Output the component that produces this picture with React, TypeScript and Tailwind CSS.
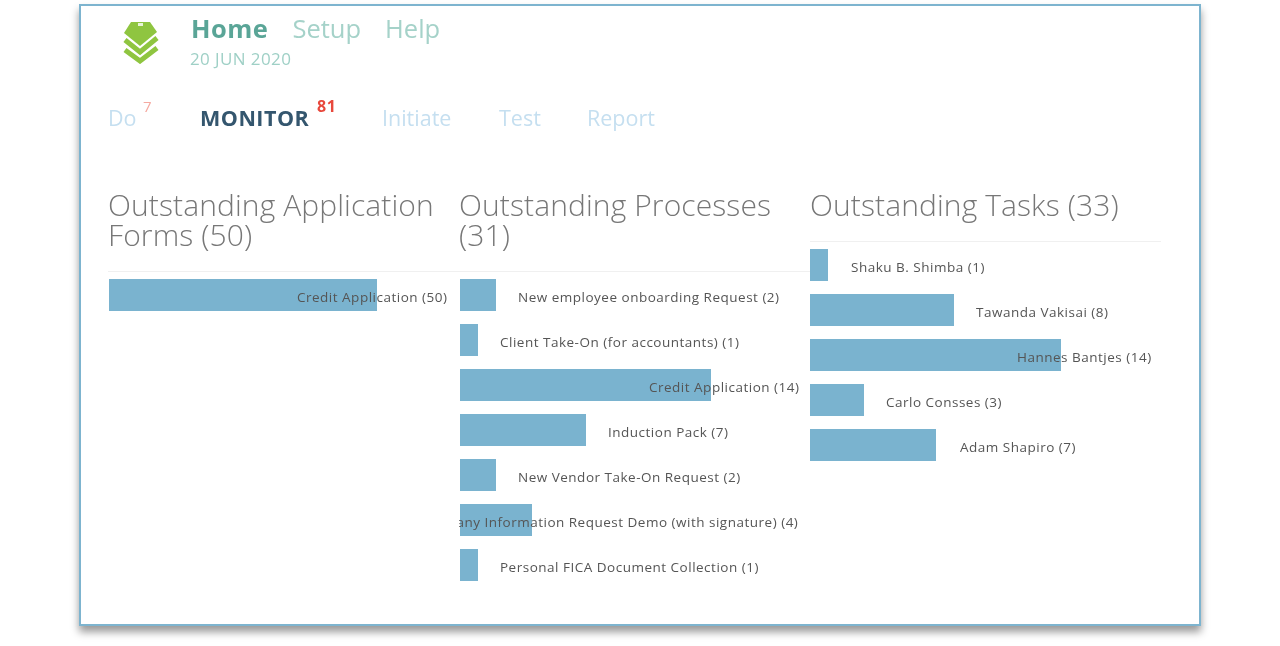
const forms = [{ label: 'Credit Application (50)', bar: 268, offset: -80 }];

const processes = [
  { label: 'New employee onboarding Request (2)', bar: 36, offset: 22 },
  { label: 'Client Take-On (for accountants) (1)', bar: 18, offset: 22 },
  { label: 'Credit Application (14)', bar: 251, offset: -62 },
  { label: 'Induction Pack (7)', bar: 126, offset: 22 },
  { label: 'New Vendor Take-On Request (2)', bar: 36, offset: 22 },
  { label: 'Company Information Request Demo (with signature) (4)', bar: 72, offset: -115 },
  { label: 'Personal FICA Document Collection (1)', bar: 18, offset: 22 },
];

const tasks = [
  { label: 'Shaku B. Shimba (1)', bar: 18, offset: 23 },
  { label: 'Tawanda Vakisai (8)', bar: 144, offset: 22 },
  { label: 'Hannes Bantjes (14)', bar: 251, offset: -44 },
  { label: 'Carlo Consses (3)', bar: 54, offset: 22 },
  { label: 'Adam Shapiro (7)', bar: 126, offset: 24 },
];

type Row = { label: string; bar: number; offset: number };

function Chart({ title, rows, heading, inset }: { title: string; rows: Row[]; heading: string; inset: string }) {
  return (
    <div className="min-w-0">
      <h2 className={`${heading} border-b border-[#f0f0f0] text-[30px] leading-[30px] tracking-[0.1px] font-light text-[#777777]`}>{title}</h2>
      <div className={`${inset} flex flex-col gap-[13px] pt-[7px] overflow-hidden`}>
        {rows.map((r) => (
          <div key={r.label} className="flex items-center h-[32px] whitespace-nowrap">
            <div className="h-[32px] shrink-0 bg-[#7ab3cf]" style={{ width: r.bar }} />
            <span className="text-[13.5px] tracking-[0.5px] text-[#555555] pt-[4px]" style={{ marginLeft: r.offset }}>
              {r.label}
            </span>
          </div>
        ))}
      </div>
    </div>
  );
}

function Logo() {
  return (
    <svg width="36" height="44" viewBox="0 0 36 44" className="shrink-0 mt-[14px]">
      <path d="M8 2 H27 L34 12 L17 26 L1 13 Z" fill="#8fc540" />
      <path d="M2 20 L17 32 L34 18" fill="none" stroke="#8fc540" strokeWidth="5" />
      <path d="M2 30 L17 41 L34 28" fill="none" stroke="#8fc540" strokeWidth="5" />
      <rect x="15" y="3" width="5" height="3" fill="#ffffff" opacity="0.8" />
    </svg>
  );
}

export default function App() {
  return (
    <div className="w-[1280px] h-[646px] bg-white pl-[79px] pt-[4px] font-['Open_Sans',sans-serif]">
      <div className="w-[1122px] h-[622px] border-2 border-[#7db4cf] bg-white shadow-[0_6px_8px_rgba(0,0,0,0.4)]">
        <div className="blur-[0.7px]">
          <div className="flex pl-[42px]">
            <Logo />
            <div className="ml-[32px] pt-[4px]">
              <div className="flex items-baseline gap-[24px] text-[25.5px] leading-[36px]">
                <span className="font-bold text-[#5aa597] tracking-[0.5px]">Home</span>
                <span className="text-[#a5d2c9]">Setup</span>
                <span className="text-[#a5d2c9]">Help</span>
              </div>
              <div className="text-[17px] leading-[20px] tracking-[0.4px] text-[#9fd0c6] mt-[3px] -ml-[1px]">20 JUN 2020</div>
            </div>
          </div>
          <div className="flex items-baseline pl-[27px] mt-[34px] text-[21.5px] leading-[30px] text-[#c5dff0]">
            <span className="w-[92px] relative">
              Do<sup className="absolute left-[35px] top-[-4px] text-[15px] leading-[14px] text-[#f5a9a0]">7</sup>
            </span>
            <span className="w-[182px] relative font-bold text-[#34566e] tracking-[0.5px]">
              MONITOR<sup className="absolute left-[117px] top-[-4px] text-[16px] leading-[14px] font-bold text-[#e8483c]">81</sup>
            </span>
            <span className="w-[117px]">Initiate</span>
            <span className="w-[88px]">Test</span>
            <span>Report</span>
          </div>
          <div className="grid grid-cols-[351px_351px_351px] pl-[27px] mt-[57px]">
            <Chart title="Outstanding Application Forms (50)" rows={forms} heading="h-[82px]" inset="pl-[1px]" />
            <Chart title="Outstanding Processes (31)" rows={processes} heading="h-[82px]" inset="pl-[1px]" />
            <Chart title="Outstanding Tasks (33)" rows={tasks} heading="h-[52px]" inset="" />
          </div>
        </div>
      </div>
    </div>
  );
}
